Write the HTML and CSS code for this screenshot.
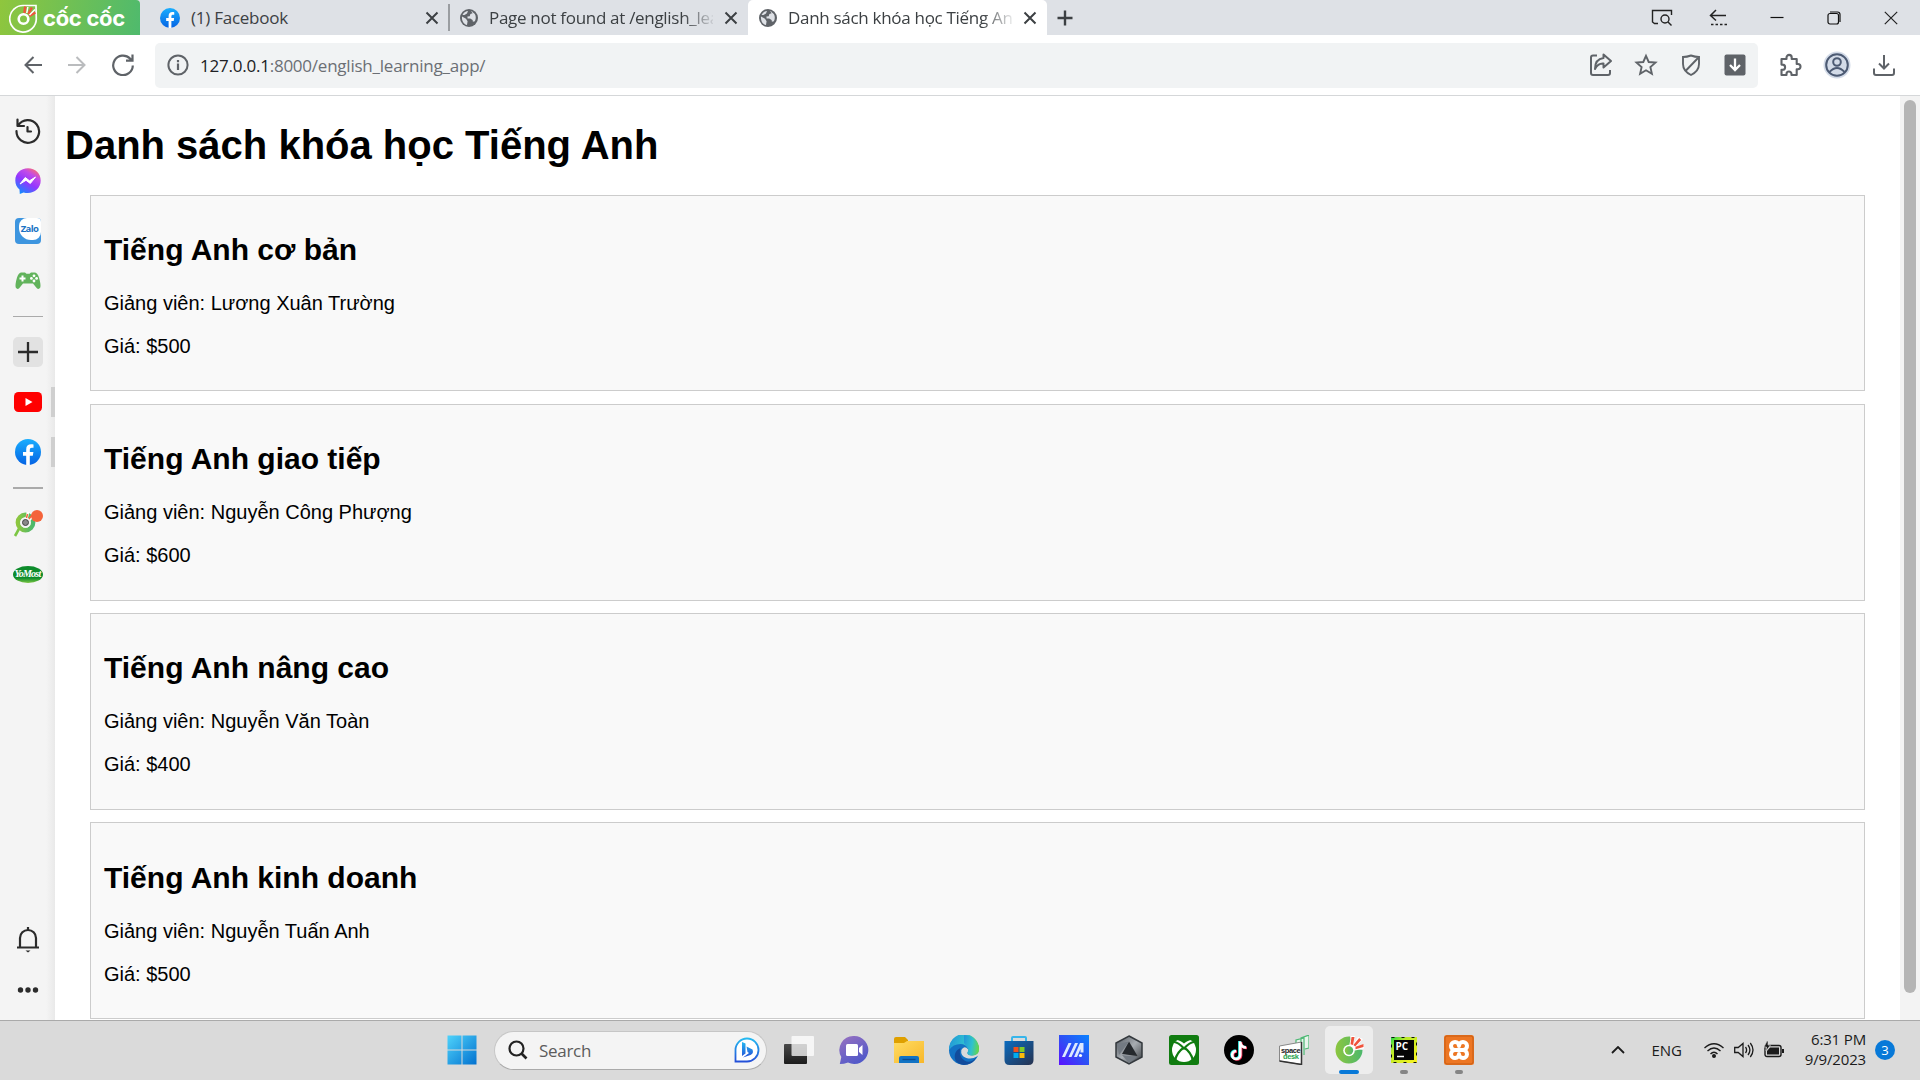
FILE: index.html
```html
<!DOCTYPE html>
<html lang="vi">
<head>
<meta charset="utf-8">
<title>Danh sách khóa học Tiếng Anh</title>
<link rel="stylesheet" href="styles.css">
</head>
<body>
<svg width="0" height="0" class="defs">
  <defs>
    <linearGradient id="fb" x1="0" y1="0" x2="0" y2="1"><stop offset="0" stop-color="#19aefe"/><stop offset="1" stop-color="#0563e4"/></linearGradient>
    <linearGradient id="msg" x1=".2" y1="1" x2=".8" y2="0"><stop offset="0" stop-color="#0a90ff"/><stop offset=".45" stop-color="#9237ff"/><stop offset=".75" stop-color="#c24be8"/><stop offset="1" stop-color="#ff6f68"/></linearGradient>
    <linearGradient id="cc" x1="0" y1="0" x2="1" y2="0"><stop offset="0" stop-color="#8dc63f"/><stop offset="1" stop-color="#4cb86c"/></linearGradient>
    <linearGradient id="win" x1="0" y1="0" x2="1" y2="1"><stop offset="0" stop-color="#4fd3fb"/><stop offset="1" stop-color="#0271cf"/></linearGradient>
    <linearGradient id="chat" x1="0" y1="0" x2=".6" y2="1"><stop offset="0" stop-color="#9a72c0"/><stop offset="1" stop-color="#5159c9"/></linearGradient>
    <linearGradient id="fold" x1="0" y1="0" x2="1" y2="1"><stop offset="0" stop-color="#ffdc62"/><stop offset="1" stop-color="#f8b72a"/></linearGradient>
    <linearGradient id="edge1" x1="0" y1=".3" x2="1" y2=".5"><stop offset="0" stop-color="#2298d8"/><stop offset=".55" stop-color="#2fc1cf"/><stop offset="1" stop-color="#62d64e"/></linearGradient>
    <linearGradient id="store" x1="0" y1="0" x2="1" y2="1"><stop offset="0" stop-color="#0a6cc0"/><stop offset="1" stop-color="#27324f"/></linearGradient>
    <linearGradient id="asus" x1="1" y1="0" x2="0" y2="1"><stop offset="0" stop-color="#0a83ff"/><stop offset=".5" stop-color="#2d50f5"/><stop offset="1" stop-color="#5a0fff"/></linearGradient>
    <linearGradient id="bing" x1="0" y1="0" x2="0" y2="1"><stop offset="0" stop-color="#25b9f0"/><stop offset="1" stop-color="#2450d8"/></linearGradient>
    <linearGradient id="pc" x1="0" y1="0" x2="1" y2="1"><stop offset="0" stop-color="#21d749"/><stop offset=".3" stop-color="#b8e928"/><stop offset="1" stop-color="#fcf420"/></linearGradient>
    <linearGradient id="arm" x1="0" y1="0" x2="1" y2="1"><stop offset="0" stop-color="#50565d"/><stop offset=".5" stop-color="#a8adb2"/><stop offset="1" stop-color="#33373b"/></linearGradient>
    <symbol id="facebook" viewBox="0 0 26 26"><circle cx="13" cy="13" r="13" fill="url(#fb)"/><path d="M11.200 26v-9.200H8v-3.900h3.200v-2.500c0-3.400 1.800-5.100 5-5.100 1 0 1.700.1 2.300.2v3.300h-1.600c-1.500 0-2.100.7-2.100 2.200v1.900h3.600l-.6 3.900h-3V26z" fill="#fff"/></symbol>
    <symbol id="globe" viewBox="0 0 18 18"><circle cx="9" cy="9" r="9" fill="#5f6368"/><path d="M2 7.500l4 2.200 1.600 2.600L7 16C4 15.500 1.500 12 2 7.500zM8.500 2.200h2.700l1.400 2-2.200.8-.7 2.200-2.300.4.200 2 2.600-.2 2.400 1.500.3 1.800 2-.4C16.500 9 16 5 13 3.500l-1-1.300zM2.500 6C4 3 6 2 8 2l-1 2.400L4.500 6z" fill="#dee1e6"/></symbol>
    <symbol id="x" viewBox="0 0 14 14"><path d="M1.500 1.500l11 11m0-11l-11 11" stroke="#3c4043" stroke-width="2" fill="none"/></symbol>
    <symbol id="coc" viewBox="0 0 30 30"><path d="M16 1.500A13.500 13.500 0 1 0 28.500 15l-9-1.500z" fill="url(#cc)"/><path d="M15 12L17 1h4l-1.500 8L24 2l5 2-6 6.500 7-1v4l-9 2z" fill="#fff"/><circle cx="15" cy="15.500" r="5.800" fill="#fff"/><circle cx="15" cy="15.500" r="4.200" fill="url(#cc)"/><path d="M17.500 2h3L19 10l-2.500-.8zM25.200 3l2 2-6 6.500-1.800-1.500zM29.500 9v3l-8 2.200v-2.500z" fill="#f0533c"/></symbol>
  </defs>
</svg>

<div class="browser">
  <header class="tabbar">
    <div class="brand">
      <svg width="30" height="32" viewBox="0 0 30 32"><path d="M27 3.500H14.500A13.300 13.300 0 1 0 27.300 17z" fill="none" stroke="#fff" stroke-width="1.700"/><circle cx="14.500" cy="17" r="4.800" fill="none" stroke="#fff" stroke-width="2.600"/><path d="M16.200 4.500l-.8 6.500m7.500-5.500l-3.500 6.500m7-1.500l-6 3.500" stroke="#f0533c" stroke-width="2.400"/><path d="M18.800 5l-1 6m8.200-3.500l-5.500 5.500" stroke="#fff" stroke-width="1.500"/></svg>
      <span>cốc cốc</span>
    </div>
    <div class="tab tab-first"><svg class="favicon fb"><use href="#facebook"/></svg><span class="label label-fb">(1) Facebook</span><svg class="close"><use href="#x"/></svg></div>
    <div class="tab"><svg class="favicon"><use href="#globe"/></svg><span class="label fade">Page not found at /english_learning</span><svg class="close"><use href="#x"/></svg></div>
    <div class="tab active"><svg class="favicon"><use href="#globe"/></svg><span class="label fade label-active">Danh sách khóa học Tiếng Anh</span><svg class="close"><use href="#x"/></svg></div>
    <svg class="newtab" viewBox="0 0 16 16"><path d="M8 .5v15M.5 8h15" stroke="#3c4043" stroke-width="2.400"/></svg>
    <div class="window-buttons">
      <svg width="22" height="18" viewBox="0 0 22 18" fill="none" stroke="#222" stroke-width="1.400"><path d="M7 14.500H3.500L1.500 13V1.500h19V6"/><circle cx="14" cy="10" r="4"/><path d="M17 13l3.500 3.500"/></svg>
      <svg width="18" height="18" viewBox="0 0 18 18" fill="none" stroke="#222" stroke-width="1.500"><path d="M7 1L1.500 6.500 7 11.500M1.500 6.500H17"/><path d="M2 15.500h16" stroke-dasharray="2.500 2"/></svg>
      <svg width="14" height="14" viewBox="0 0 14 14"><path d="M.5 6.500h13" stroke="#111" stroke-width="1.200"/></svg>
      <svg width="14" height="14" viewBox="0 0 14 14" fill="none" stroke="#111" stroke-width="1.200"><rect x="1" y="2.500" width="10.500" height="10.500" rx="2"/><path d="M3 1h7.500Q13 1 13 3.500V11"/></svg>
      <svg width="14" height="14" viewBox="0 0 14 14"><path d="M.8.8l12.400 12.400m0-12.400L.8 13.200" stroke="#222" stroke-width="1.200"/></svg>
    </div>
  </header>

  <nav class="toolbar">
    <div class="nav-buttons">
      <svg width="18" height="18" viewBox="0 0 18 18" fill="none" stroke="#5f6368" stroke-width="2"><path d="M9.500 1L1.500 9l8 8M1.500 9H18"/></svg>
      <svg width="18" height="18" viewBox="0 0 18 18" fill="none" stroke="#babcbe" stroke-width="2"><path d="M8.500 1l8 8-8 8M16.500 9H0"/></svg>
      <svg width="22" height="22" viewBox="0 0 22 22" fill="none" stroke="#5f6368" stroke-width="2.200"><path d="M20.800 11.500A9.800 9.800 0 1 1 18 4.500l2 2M20.500.5v6.200H14"/></svg>
    </div>
    <div class="omnibox">
      <svg width="22" height="22" viewBox="0 0 22 22"><circle cx="11" cy="11" r="9.600" fill="none" stroke="#5f6368" stroke-width="2"/><path d="M11 9.500V16M11 6v2.200" stroke="#5f6368" stroke-width="2.200"/></svg>
      <span class="url"><b>127.0.0.1</b>:8000/english_learning_app/</span>
      <div class="page-actions">
        <svg width="24" height="24" viewBox="0 0 24 24" fill="none" stroke="#5f6368" stroke-width="2" stroke-linejoin="round"><path d="M8 2.500H4q-2 0-2 2V20q0 2 2 2h15q2 0 2-2v-3"/><path d="M14.500 1.500l7.500 6.500-7.500 6.500v-4Q9 10 6 16q0-10 8.500-11z"/></svg>
        <svg width="24" height="24" viewBox="0 0 24 24" fill="none" stroke="#5f6368" stroke-width="1.900"><path d="M12 2.800l2.700 6.200 6.800.6-5.100 4.500 1.500 6.700L12 17.300l-5.900 3.500 1.500-6.700-5.100-4.500 6.800-.6z"/></svg>
        <svg width="24" height="24" viewBox="0 0 24 24" fill="none" stroke="#5f6368" stroke-width="1.900"><path d="M12 2.500q4 1.500 8 1.500v7q0 7-8 11-8-4-8-11V4q4 0 8-1.500zM19.500 4.500L6 18.500"/></svg>
        <svg width="22" height="22" viewBox="0 0 22 22"><rect x=".5" y=".5" width="21" height="21" rx="2" fill="#5f6368"/><path d="M11 4.500v11M6 11l5 5 5-5" fill="none" stroke="#fff" stroke-width="2.300"/></svg>
      </div>
    </div>
    <div class="browser-actions">
      <svg width="24" height="24" viewBox="0 0 24 24" fill="none" stroke="#5f6368" stroke-width="2.100" stroke-linejoin="round"><path d="M3.500 6h5V4.500a2.600 2.600 0 0 1 5.200 0V6h5v5h1.200a2.600 2.600 0 0 1 0 5.200h-1.200V22h-5.200v-1a2.500 2.500 0 0 0-5 0v1h-5v-5.200h1a2.600 2.600 0 0 0 0-5.200h-1z"/></svg>
      <svg width="28" height="28" viewBox="0 0 28 28" fill="none" stroke="#4c5a73" stroke-width="2"><circle cx="14" cy="14" r="13.500" fill="#d3dbe8" stroke="none"/><circle cx="14" cy="14" r="10.800"/><circle cx="14" cy="11" r="3.800"/><path d="M6.500 21q7.500-8 15 0"/></svg>
      <svg width="24" height="24" viewBox="0 0 24 24" fill="none" stroke="#5f6368" stroke-width="2"><path d="M12 2v13M7 10.500l5 5 5-5M2 15.500V20q0 2 2 2h16q2 0 2-2v-4.500"/></svg>
    </div>
  </nav>

  <div class="content">
    <aside class="sidebar">
      <div class="side-group">
        <svg width="26" height="26" viewBox="0 0 26 26" fill="none" stroke="#2b2b2b" stroke-width="2.200" stroke-linecap="round" stroke-linejoin="round"><path d="M2.500 1.500V8H9M3.200 7.500A11.300 11.300 0 1 1 1.500 13"/><path d="M12.500 9v4.500H16"/></svg>
        <svg width="26" height="26" viewBox="0 0 26 26"><path d="M13 .3C5.700.3.300 5.500.300 12.400c0 3.800 1.600 7 4.200 9.100l.3 4.500 3.800-1.500c9 2.400 17.100-3.300 17.100-12C25.700 5.500 20.300.3 13 .3z" fill="url(#msg)"/><path d="M5 16l5.200-6.500 4.300 3.300L20.500 9l-5.200 6.500-4.300-3.200z" fill="#fff" stroke="#fff" stroke-width="1" stroke-linejoin="round"/></svg>
        <div class="zalo"><span>Zalo</span></div>
        <svg width="26" height="26" viewBox="0 0 26 26"><path d="M6 4.500h4l1.500 1.300h3L16 4.500h4q2.500.5 4 5 2 7 1.300 10-2 3-4.500-.5L18 15.500H8L5.200 19q-2.500 3.500-4.500.5Q0 16.500 2 9.500q1.500-4.500 4-5z" fill="#62b35c"/><path d="M7.500 7.500v6M4.500 10.500h6" stroke="#fff" stroke-width="2"/><g fill="#fff"><circle cx="19" cy="7.800" r="1.400"/><circle cx="19" cy="13" r="1.400"/><circle cx="16.400" cy="10.400" r="1.400"/><circle cx="21.600" cy="10.400" r="1.400"/></g></svg>
      </div>
      <hr>
      <div class="side-add"><svg width="20" height="20" viewBox="0 0 20 20"><path d="M10 0v20M0 10h20" stroke="#2b2b2b" stroke-width="2.300"/></svg></div>
      <div class="pinned first"><svg width="28" height="20" viewBox="0 0 28 20"><rect width="28" height="20" rx="4.500" fill="#f00"/><path d="M11.500 6l7 4-7 4z" fill="#fff"/></svg></div>
      <div class="pinned"><svg width="26" height="26"><use href="#facebook"/></svg></div>
      <hr class="lower">
      <svg class="promo" width="30" height="30" viewBox="0 0 30 30"><path d="M7 18L2 27" stroke="#7cc644" stroke-width="2.600"/><circle cx="12.500" cy="13.500" r="7.600" fill="none" stroke="url(#cc)" stroke-width="4.600"/><circle cx="12.500" cy="13.500" r="5.300" fill="#f4f4f4"/><circle cx="12.500" cy="13.500" r="3" fill="#888" stroke="#444" stroke-width="1"/><path d="M15 3l-1.500 7m7-4l-4 5" stroke="#fff" stroke-width="2.500"/><path d="M14.500 5l-1 4M19 6l-3 4" stroke="#f4633a" stroke-width="1.500"/><circle cx="24" cy="7" r="6" fill="#f4633a"/></svg>
      <div class="yomost">YoMost</div>
      <div class="side-bottom">
        <svg width="26" height="28" viewBox="0 0 26 28" fill="none" stroke="#2b2b2b" stroke-width="2.200"><path d="M5 21V12a8 8 0 0 1 16 0v9M2 21.500h22M13 1v3"/><path d="M10.500 24.500h5l-2.500 2z" fill="#2b2b2b" stroke="none"/></svg>
        <svg width="22" height="8" viewBox="0 0 22 8" fill="#2b2b2b"><circle cx="3.500" cy="4" r="2.700"/><circle cx="11" cy="4" r="2.700"/><circle cx="18.500" cy="4" r="2.700"/></svg>
      </div>
    </aside>
    <main class="page">
      <h1>Danh sách khóa học Tiếng Anh</h1>
      <ul class="courses">
        <li class="course"><h2>Tiếng Anh cơ bản</h2><p>Giảng viên: Lương Xuân Trường</p><p>Giá: $500</p></li>
        <li class="course"><h2>Tiếng Anh giao tiếp</h2><p>Giảng viên: Nguyễn Công Phượng</p><p>Giá: $600</p></li>
        <li class="course"><h2>Tiếng Anh nâng cao</h2><p>Giảng viên: Nguyễn Văn Toàn</p><p>Giá: $400</p></li>
        <li class="course"><h2>Tiếng Anh kinh doanh</h2><p>Giảng viên: Nguyễn Tuấn Anh</p><p>Giá: $500</p></li>
      </ul>
    </main>
    <div class="scrollbar"><div class="thumb"></div></div>
  </div>
</div>

<footer class="taskbar">
  <svg class="start" width="30" height="30" viewBox="0 0 30 30"><path d="M.5.5h14v14H.5zM15.500.5h14v14h-14zM.5 15.500h14v14H.5zM15.500 15.500h14v14h-14z" fill="url(#win)"/></svg>
  <div class="search">
    <svg width="20" height="20" viewBox="0 0 20 20" fill="none" stroke="#222" stroke-width="2.200"><circle cx="8.500" cy="8.500" r="7"/><path d="M13.500 13.500l5 5" stroke-width="2.600"/></svg>
    <span>Search</span>
    <svg width="26" height="26" viewBox="0 0 26 26"><path d="M1.500 24.500V13A11.500 11.500 0 1 1 13 24.500z" fill="#fff" stroke="url(#bing)" stroke-width="1.800"/><path d="M8 5l3.500 1.500v10L8 19zM12.500 9.500l6 3q1.500 4-2 5.500L9 20.500 15 16l-1.500-1z" fill="url(#bing)"/></svg>
  </div>
  <div class="apps">
    <svg viewBox="0 0 30 30"><defs><linearGradient id="tv" x1="0" y1="0" x2="0" y2="1"><stop offset="0" stop-color="#494949"/><stop offset="1" stop-color="#1c1c1c"/></linearGradient></defs><rect x="0" y="9" width="23" height="20" rx="1" fill="url(#tv)"/><rect x="7.500" y="1" width="22.500" height="20" rx="1" fill="#fff" fill-opacity=".75"/></svg>
    <svg viewBox="0 0 30 30"><path d="M15 1a14 14 0 1 1-6 26.500Q5 29 .8 29l1.500-7A14 14 0 0 1 15 1z" fill="url(#chat)"/><rect x="7" y="9" width="12" height="12" rx="1.500" fill="#fff"/><path d="M20 13l3.500-3v10L20 17z" fill="#fff"/></svg>
    <svg viewBox="0 0 30 30"><path d="M0 4q0-2 2-2h9l3 3v7H0z" fill="#dfa000"/><path d="M0 8h10l3-2h17v22H0z" fill="url(#fold)"/><path d="M5 28v-5q0-2 2-2h16q2 0 2 2v5z" fill="#1173c4"/><path d="M8.500 24.500h13" stroke="#0b4b91" stroke-width="1.300"/></svg>
    <svg viewBox="0 0 30 30"><circle cx="15" cy="15" r="15" fill="#1372c4"/><path d="M0 15A15 15 0 0 1 30 13q.5 7-7 7.500-5 0-4.500-3 1.500-2 .5-4Q17 9 11.500 9 4 9 0 15z" fill="url(#edge1)"/><path d="M11.500 13Q9 21 15.500 25.500q5.500 3.500 12-3Q23 30 15 30 4 28.500 6 19q1-4 5.500-6z" fill="#124c9c"/><path d="M30 14q0 6-7 6.500-5 0-4.500-3 .8-1 .8-3-4-4.500-7 .5-1 6 5 8 6 1.500 10.500-1.500L30 20z" fill="#dadada"/><path d="M15 0a15 15 0 0 1 15 14q0 6-7 6.500-5 0-4.500-3 1.500-2 .5-4L15 8z" fill="url(#edge1)"/></svg>
    <svg viewBox="0 0 30 30"><path d="M8 8V3q0-1 1-1h12q1 0 1 1v5" fill="none" stroke="#37b5ea" stroke-width="2"/><path d="M.5 6h29v19q0 5-5 5H5.500q-5 0-5-5z" fill="url(#store)"/><path d="M9.500 12h5v5h-5z" fill="#f1511b"/><path d="M15.500 12h5v5h-5z" fill="#80cc28"/><path d="M9.500 18h5v5h-5z" fill="#00adef"/><path d="M15.500 18h5v5h-5z" fill="#fbbc09"/></svg>
    <svg viewBox="0 0 30 30"><path d="M0 0h30v30H0z" fill="url(#asus)"/><path d="M3 22L9.500 8H12.500L6 22zM9.500 22L16 8h3l-6.500 14zM15 22l6-14h3.500v9.500h-3V14L18 22z" fill="#dce8ff"/><circle cx="21.500" cy="20.500" r="1.600" fill="#fff"/></svg>
    <svg viewBox="0 0 30 30"><path d="M15 1l13 7v14l-13 7-13-7V8z" fill="url(#arm)" stroke="#33383d" stroke-width="1.500"/><path d="M15 6.500l8.500 14.500L8 19z" fill="#25292d"/><path d="M15 6.500L5 20l-2-11zM8 20l15 2-8 6z" fill="#737a82"/></svg>
    <svg viewBox="0 0 30 30"><rect width="30" height="30" rx="2.500" fill="#107c10"/><circle cx="15" cy="15" r="12" fill="#fff"/><path d="M6.500 5q4-.5 8.500 3.500Q19.500 4.500 23.500 5L21 2H9z" fill="#107c10"/><path d="M5 7q4 0 10 6.500Q21 7 25 7M15 12.500Q8 17 6 25.500M15 12.500q7 4.500 9 13" fill="none" stroke="#107c10" stroke-width="2.200"/></svg>
    <svg viewBox="0 0 30 30"><circle cx="15" cy="15" r="15" fill="#000"/><g fill="none" stroke-width="2.700"><path d="M15.500 6v13.500a4 4 0 1 1-4-4M15.500 7q1 5 6 5" stroke="#25f4ee"/><path d="M17 7v13.500a4 4 0 1 1-4-4M17 8q1 5 6 5" stroke="#fe2c55"/><path d="M16.200 6.500V20a4 4 0 1 1-4-4M16.200 7.500q1 5 6 5" stroke="#fff"/></g></svg>
    <svg viewBox="0 0 30 30"><path d="M17 10V5l8-2v17M22 7V3l8-3v13l-4 1" fill="#e8f5ec" stroke="#4cb873" stroke-width="1.200"/><path d="M.5 11L22.500 7v22.500L.5 26z" fill="#fff" stroke="#888"/><path d="M22.500 7v22.500L.5 26" fill="none" stroke="#333" stroke-width="1.500"/><text x="2" y="17.500" class="sd dark">space</text><text x="4" y="24" class="sd green">desk</text></svg>
    <span class="app current"><svg viewBox="0 0 30 30"><use href="#coc"/></svg></span>
    <span class="app running"><svg viewBox="0 0 30 30"><path d="M2 2h26v26H2z" fill="url(#pc)"/><path d="M2.500 2.500h25v25h-25z" fill="none" stroke="#111" stroke-dasharray="3 7"/><path d="M5 5h20v20H5z" fill="#050505"/><text x="6.500" y="15.300" class="pctext">PC</text><path d="M8 21.500h7" stroke="#fff" stroke-width="1.500"/></svg></span>
    <span class="app running"><svg viewBox="0 0 30 30"><rect width="30" height="30" rx="2.500" fill="#ed7623"/><rect x="1" y="1" width="28" height="28" rx="2" fill="none" stroke="#c75d14"/><path d="M10.500 15a4 4 0 1 1 4.500-4 4 4 0 1 1 4.500 4 4 4 0 1 1-4.500 4 4 4 0 1 1-4.500-4zM10.500 15h9" fill="none" stroke="#fff" stroke-width="4" stroke-linejoin="round"/></svg></span>
  </div>
  <div class="tray">
    <svg width="14" height="8" viewBox="0 0 14 8"><path d="M1 7l6-6 6 6" fill="none" stroke="#1b1b1b" stroke-width="1.800"/></svg>
    <span class="lang">ENG</span>
    <div class="status">
      <svg width="20" height="20" viewBox="0 0 20 20" fill="none" stroke="#1b1b1b" stroke-width="1.400"><path d="M.5 8q9.500-8.500 19 0M3.500 11q6.500-6 13 0M6.500 14q3.500-3.500 7 0"/><circle cx="10" cy="16" r="1.300" fill="#1b1b1b"/></svg>
      <svg width="20" height="20" viewBox="0 0 20 20" fill="none" stroke="#1b1b1b" stroke-width="1.300"><path d="M.7 7.500h3.500L9 3.500v13l-4.800-4H.7zM11.500 7q2.200 3 0 6M14 5q3.800 5 0 10M16.300 3q5.400 7 0 14"/></svg>
      <svg width="20" height="20" viewBox="0 0 20 20"><rect x="1" y="5.500" width="16" height="11" rx="2" fill="none" stroke="#1b1b1b" stroke-width="1.400"/><path d="M6 7.500h9v7H3V11zM18 9h2v4h-2z" fill="#1b1b1b"/><path d="M3 1L0 7h2.500L2 11l4.500-6H4V1z" fill="#1b1b1b" stroke="#dadada" stroke-width=".6"/></svg>
    </div>
    <div class="clock"><span>6:31 PM</span><span class="date">9/9/2023</span></div>
    <span class="count">3</span>
  </div>
</footer>
</body>
</html>
```
FILE: styles.css
```css
* { box-sizing: border-box; }
html, body { margin: 0; height: 100%; overflow: hidden; }
body {
  display: flex;
  flex-direction: column;
  font-family: "Open Sans", "Noto Sans", sans-serif;
  background: #fff;
}
svg { display: block; flex: none; }
.defs { position: absolute; }

.browser { flex: 1; min-height: 0; display: flex; flex-direction: column; }

/* tab strip */
.tabbar { height: 35px; flex: none; display: flex; align-items: center; background: #dee1e6; }
.brand {
  width: 140px; height: 35px; flex: none;
  display: flex; align-items: center; padding-left: 9px; gap: 4px;
  background: linear-gradient(100deg, #8fc63d, #4fba6d);
  border-top-right-radius: 4px;
  color: #fff;
}
.brand span { font: 700 22px/36px Inter, sans-serif; letter-spacing: -.3px; white-space: nowrap; }
.tab {
  height: 35px; width: 298px; flex: none;
  display: flex; align-items: center; padding: 0 10px;
}
.tab-first { width: 310px; padding: 0 9px 0 20px; border-right: 2px solid transparent; border-image: linear-gradient(transparent 5px, #9a9da1 5px 30px, transparent 30px) 1; }
.favicon { width: 18px; height: 18px; }
.favicon.fb { width: 20px; height: 20px; margin-top: 1px; }
.label { flex: 1; margin-left: 11px; height: 28px; line-height: 27px; font-size: 17px; color: #3c4043; overflow: hidden; white-space: nowrap; letter-spacing: -.25px; }
.label.fade { letter-spacing: -.3px; -webkit-mask: linear-gradient(90deg, #000 calc(100% - 30px), transparent calc(100% + 4px)); mask: linear-gradient(90deg, #000 calc(100% - 30px), transparent calc(100% + 4px)); }
.close { width: 14px; height: 14px; margin-left: 11px; }
.active { width: 299px; padding-left: 11px; background: #fff; border-radius: 5px 5px 0 0; }
.newtab { width: 16px; height: 16px; margin-left: 10px; }
.window-buttons { margin-left: auto; padding-right: 22px; display: flex; align-items: center; }
.window-buttons svg + svg { margin-left: 43px; }
.window-buttons svg:nth-child(2) { margin-left: 36px; }

/* toolbar */
.toolbar { height: 61px; flex: none; display: flex; align-items: center; border-bottom: 1px solid #d5d7d9; background: #fff; }
.nav-buttons { width: 155px; display: flex; align-items: center; padding-left: 24px; gap: 26px; }
.omnibox { width: 1603px; height: 45px; display: flex; align-items: center; background: #f1f3f4; border-radius: 5px; padding: 0 12px; }
.url { margin-left: 11px; font-size: 17px; color: #6b6f74; letter-spacing: -.23px; }
.url b { font-weight: 400; color: #202124; }
.page-actions { margin-left: auto; display: flex; align-items: center; gap: 21px; }
.browser-actions { margin-left: 20px; display: flex; align-items: center; gap: 21px; }

/* side panel */
.content { flex: 1; min-height: 0; display: flex; overflow: hidden; }
.sidebar {
  width: 55px; flex: none; display: flex; flex-direction: column; align-items: center;
  padding-top: 22px; background: linear-gradient(90deg, #f4f4f4 46px, #e9e9e9);
}
.side-group { display: flex; flex-direction: column; gap: 24px; }
.zalo { width: 26px; height: 26px; background: #3d95df; border-radius: 4px; padding-left: 4px; }
.zalo span { display: block; height: 22px; background: #fff; border-radius: 8px 4px 8px 12px; color: #1b73c4; font: 700 9.500px/21px "Open Sans", sans-serif; letter-spacing: -.6px; text-align: center; }
.sidebar hr { width: 30px; height: 1px; flex: none; border: 0; margin: 22px 0 20px; background: #aaa; }
.side-add { width: 30px; height: 30px; flex: none; display: grid; place-items: center; border-radius: 5px; background: #e2e2e2; }
.pinned { width: 55px; height: 30px; flex: none; display: grid; place-items: center; margin-top: 20px; background: linear-gradient(#cfcfcf, #cfcfcf) right / 4px 30px no-repeat; }
.sidebar hr.lower { height: 2px; margin: 20px 0; }
.yomost { width: 30px; height: 17px; flex: none; margin-top: 27px; border-radius: 50%; background: linear-gradient(#0d8b2b 70%, #7cc644); color: #fff; font: italic 700 10px/15px "Liberation Serif", serif; letter-spacing: -.8px; text-align: center; }
.side-bottom { margin-top: auto; padding-bottom: 26px; display: flex; flex-direction: column; align-items: center; gap: 32px; }

/* course page */
.page { flex: 1; padding: 0 10px; font: 20px/23px "Liberation Sans", Arial, sans-serif; color: #000; overflow: hidden; }
.page h1 { margin: 26px 0 27px; font-size: 40px; line-height: 46px; }
.courses { list-style: none; margin: 0; padding: 0 25px; }
.course { height: 197px; margin-bottom: 12px; padding: 12px 13px; border: 1px solid #ccc; background: #f9f9f9; }
.course:first-child { height: 196px; margin-bottom: 13px; }
.course:last-child { padding-top: 13px; }
.course h2 { margin: 25px 0; font-size: 30px; line-height: 34px; }
.course p { margin: 0 0 20px; }
.scrollbar { width: 20px; flex: none; padding: 4px 4px 0; background: #f3f3f3; }
.thumb { height: 893px; border-radius: 6px; background: #b5b5b5; }

/* taskbar */
.taskbar { height: 60px; flex: none; display: flex; align-items: center; border-top: 1px solid #aaa; background: #dadada; padding: 0 0 1px 447px; }
.search { width: 273px; height: 39px; margin-left: 17px; display: flex; align-items: center; padding: 0 6px 0 13px; border: 1px solid #c6c6c6; border-bottom-color: #aaa; border-radius: 20px; background: #f4f4f4; font-size: 17px; color: #5c5c5c; letter-spacing: -.3px; }
.search span { flex: 1; margin-left: 11px; }
.apps { display: flex; align-items: center; gap: 25px; margin-left: 17px; }
.apps svg { width: 30px; height: 30px; }
.app { width: 48px; height: 48px; margin: 0 -9px; display: grid; place-items: center; border-radius: 5px; position: relative; }
.current { background: #ededed; }
.app::after { content: ""; position: absolute; bottom: 0; left: 20px; width: 8px; height: 4px; border-radius: 2px; background: #858585; }
.current::after { left: 14px; width: 20px; background: #0879d8; }
.sd { font: 700 7.500px "Liberation Sans", sans-serif; letter-spacing: -.4px; }
.dark { fill: #222; }
.green { fill: #27a350; }
.pctext { font: 700 10px "Open Sans", sans-serif; fill: #fff; }
.tray { margin-left: auto; padding-right: 25px; display: flex; align-items: center; color: #1b1b1b; font-size: 15px; }
.lang { margin-left: 26px; }
.status { display: flex; gap: 10px; margin-left: 22px; }
.clock { width: 82px; padding-bottom: 2px; display: flex; flex-direction: column; align-items: flex-end; line-height: 20px; letter-spacing: -.15px; }
.count { width: 20px; height: 20px; margin-left: 9px; border-radius: 50%; background: #0879d8; color: #fff; font-size: 13px; line-height: 20px; text-align: center; }
```
